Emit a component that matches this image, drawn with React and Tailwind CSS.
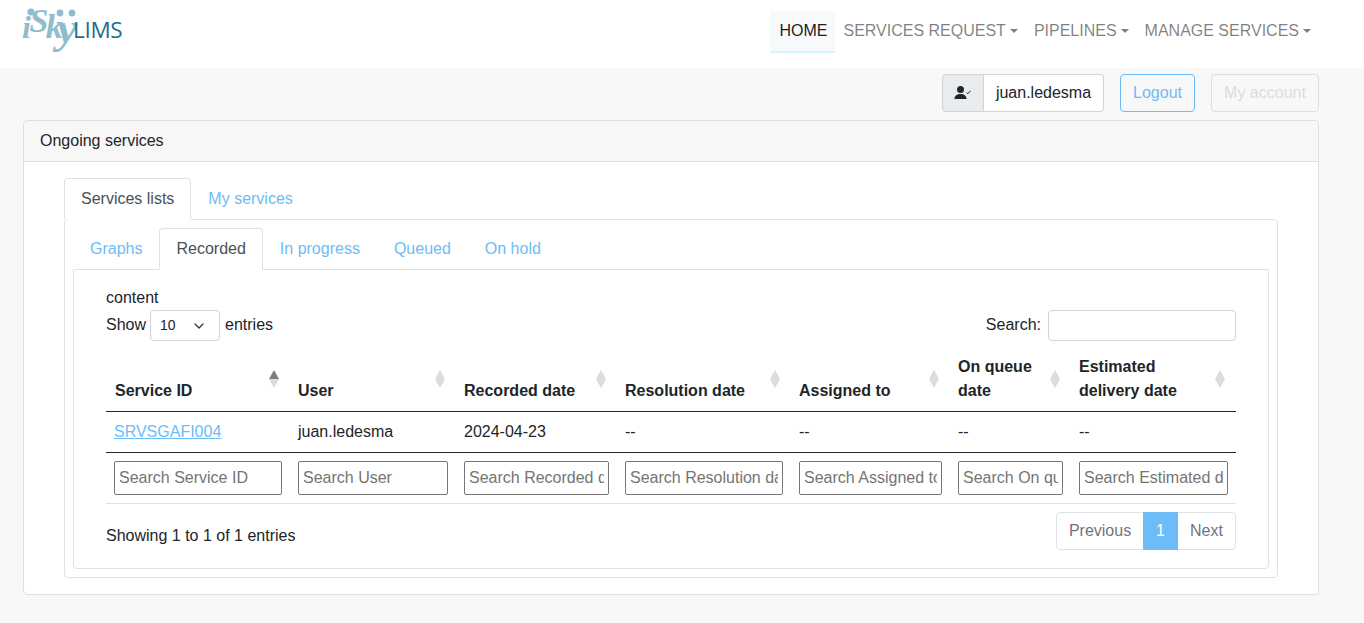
import { ChevronDown } from 'lucide-react';

const columns = [
  { label: ['Service ID'], width: 184, active: true, placeholder: 'Search Service ID' },
  { label: ['User'], width: 166, placeholder: 'Search User' },
  { label: ['Recorded date'], width: 161, placeholder: 'Search Recorded date' },
  { label: ['Resolution date'], width: 174, placeholder: 'Search Resolution date' },
  { label: ['Assigned to'], width: 159, placeholder: 'Search Assigned to' },
  { label: ['On queue', 'date'], width: 121, placeholder: 'Search On queue date' },
  { label: ['Estimated', 'delivery date'], width: 165, placeholder: 'Search Estimated delivery date' },
];

const row = ['SRVSGAFI004', 'juan.ledesma', '2024-04-23', '--', '--', '--', '--'];

function Logo() {
  return (
    <svg width="110" height="60" viewBox="0 0 110 60" className="mt-[2px] ml-[22px] shrink-0">
      <circle cx="9" cy="10" r="3.600" fill="#8fbdcd" />
      <circle cx="38" cy="11" r="3.400" fill="#8fbdcd" />
      <circle cx="50" cy="11" r="3.400" fill="#8fbdcd" />
      <text x="0" y="36" fill="#8fbdcd" fontFamily="'Liberation Serif', serif" fontStyle="italic" fontWeight="700" letterSpacing="-1.500">
        <tspan fontSize="32">i</tspan>
        <tspan fontSize="34" dy="-6">S</tspan>
        <tspan fontSize="34" dy="6" dx="-1">k</tspan>
        <tspan fontSize="45" dy="5" dx="-4">y</tspan>
        <tspan
          x="51"
          fontSize="22.500"
          dy="-5"
          fill="#1c6d8c"
          fontFamily="'Open Sans', sans-serif"
          fontStyle="normal"
          fontWeight="400"
          letterSpacing="-0.300"
        >
          LIMS
        </tspan>
      </text>
    </svg>
  );
}

function NavItem({ children }) {
  return (
    <a className="flex items-start px-[8px] pt-[8px] text-[#00000080] h-[42px] whitespace-nowrap">
      {children}
      <span className="ml-[4px] mt-[10px] w-0 h-0 border-x-[4.8px] border-x-transparent border-t-[4.8px] border-t-[#00000080]" />
    </a>
  );
}

function UserIcon() {
  return (
    <svg width="18" height="14" viewBox="0 0 18 14" fill="#212529">
      <circle cx="6.500" cy="3.600" r="3.500" />
      <path d="M0.500 13c0-3.300 2.500-5 6-5s6 1.700 6 5z" />
      <path d="M12.500 6.500l1.300 1.300 2.700-3" fill="none" stroke="#212529" strokeWidth="1" />
    </svg>
  );
}

function SortIcon({ active }) {
  return (
    <span className="absolute right-[11px] top-[19px] flex flex-col">
      <span className={`w-0 h-0 border-x-[5px] border-x-transparent border-b-[9px] ${active ? 'border-b-[#7d7d7d]' : 'border-b-[#dcdcdc]'}`} />
      <span className="w-0 h-0 border-x-[5px] border-x-transparent border-t-[9px] border-t-[#dcdcdc]" />
    </span>
  );
}

function Tab({ active, children }) {
  return active ? (
    <a className="block h-[42px] px-[16px] pt-[8px] bg-white border border-[#dee2e6] border-b-white rounded-t-[4px] text-[#495057] relative">
      {children}
    </a>
  ) : (
    <a className="block h-[41px] px-[17px] pt-[9px] text-[#6cbcf7]">{children}</a>
  );
}

export default function App() {
  return (
    <div className="min-h-[623px] bg-[#f8f8f8] text-[16px] leading-[24px] text-[#212529] font-['Liberation_Sans',Arial,sans-serif]">
      <nav className="h-[68px] bg-white flex justify-between">
        <Logo />
        <div className="flex items-start pt-[11px] pr-[45px]">
          <a className="h-[42px] pl-[9px] pr-[8px] pt-[8px] bg-[#f8f9fa] border-b-2 border-[#d2f4fb] text-[#000000e6]">HOME</a>
          <NavItem>SERVICES REQUEST</NavItem>
          <NavItem>PIPELINES</NavItem>
          <NavItem>MANAGE SERVICES</NavItem>
        </div>
      </nav>

      <div className="flex justify-end items-center gap-4 pt-[6px] pr-[45px] h-[44px]">
        <div className="flex h-[38px] w-[162px]">
          <span className="w-[42px] flex items-center justify-center bg-[#e9ecef] border border-[#ced4da] rounded-l-[4px]">
            <UserIcon />
          </span>
          <span className="flex-1 flex items-center justify-center bg-white border border-l-0 border-[#ced4da] rounded-r-[4px]">
            juan.ledesma
          </span>
        </div>
        <a className="h-[38px] w-[75px] flex items-center justify-center border border-[#6cbcf7] rounded-[4px] text-[#6cbcf7]">Logout</a>
        <a className="h-[38px] w-[108px] flex items-center justify-center border border-[#dcdfe2] rounded-[4px] text-[#dcdcdc]">My account</a>
      </div>

      <section className="mt-[8px] ml-[23px] mr-[45px] h-[475px] bg-white border border-[#dfdfdf] rounded-[4px]">
        <div className="h-[41px] px-[16px] flex items-center bg-[#f7f7f7] border-b border-[#dfdfdf] rounded-t-[4px]">Ongoing services</div>
        <div className="pt-[16px] px-[40px]">
          <div className="flex h-[41px]">
            <Tab active>Services lists</Tab>
            <Tab>My services</Tab>
          </div>
          <div className="h-[359px] border border-[#dee2e6] rounded-[4px] px-[8px] pt-[8px]">
            <div className="flex h-[41px]">
              <Tab>Graphs</Tab>
              <Tab active>Recorded</Tab>
              <Tab>In progress</Tab>
              <Tab>Queued</Tab>
              <Tab>On hold</Tab>
            </div>
            <div className="h-[300px] border border-[#dee2e6] rounded-b-[4px] px-[32px] pt-[16px]">
              <div>content</div>
              <div className="flex justify-between items-center h-[32px] mt-[-1px]">
                <div className="flex items-center">
                  Show
                  <span className="ml-[4px] mr-[5px] w-[70px] h-[31px] pl-[9px] pr-[20px] flex items-center justify-between relative bg-white border border-[#ced4da] rounded-[4px] text-[14px]">
                    10
                    <ChevronDown size={16} strokeWidth={2} className="absolute right-[12px] top-[7px] text-[#343a40]" />
                  </span>
                  entries
                </div>
                <div className="flex items-center">
                  Search:
                  <input className="ml-[7px] w-[188px] h-[31px] bg-white border border-[#ced4da] rounded-[4px]" />
                </div>
              </div>

              <table className="mt-[10px] w-[1130px] table-fixed border-collapse">
                <colgroup>
                  {columns.map((c) => (
                    <col key={c.placeholder} style={{ width: c.width }} />
                  ))}
                </colgroup>
                <thead>
                  <tr className="border-b border-[#212529]">
                    {columns.map((c) => (
                      <th key={c.placeholder} className={`relative h-[60px] pr-[8px] pb-[8px] text-left font-bold align-bottom ${c.active ? 'pl-[9px]' : 'pl-[8px]'}`}>
                        {c.label.map((l) => (
                          <div key={l}>{l}</div>
                        ))}
                        <SortIcon active={c.active} />
                      </th>
                    ))}
                  </tr>
                </thead>
                <tbody>
                  <tr className="border-b border-[#212529] h-[41px]">
                    {row.map((v, i) => (
                      <td key={i} className={`px-[8px] ${i === 0 ? 'text-[#6cbcf7] underline' : ''}`}>{v}</td>
                    ))}
                  </tr>
                  <tr className="border-b border-[#dee2e6] h-[51px]">
                    {columns.map((c) => (
                      <td key={c.placeholder} className="px-[8px]">
                        <input
                          placeholder={c.placeholder}
                          className="w-full h-[34px] px-[4px] bg-white border border-[#767676] rounded-[2px] placeholder:text-[#757575]"
                        />
                      </td>
                    ))}
                  </tr>
                </tbody>
              </table>

              <div className="flex justify-between items-start mt-[8px]">
                <div className="pt-[12px]">Showing 1 to 1 of 1 entries</div>
                <div className="flex h-[38px] border border-[#dee2e6] rounded-[4px] text-[#6c757d]">
                  <a className="w-[86px] flex items-center justify-center">Previous</a>
                  <a className="w-[35px] flex items-center justify-center bg-[#6cbcf7] text-white my-[-1px]">1</a>
                  <a className="w-[57px] flex items-center justify-center">Next</a>
                </div>
              </div>
            </div>
          </div>
        </div>
      </section>
    </div>
  );
}
